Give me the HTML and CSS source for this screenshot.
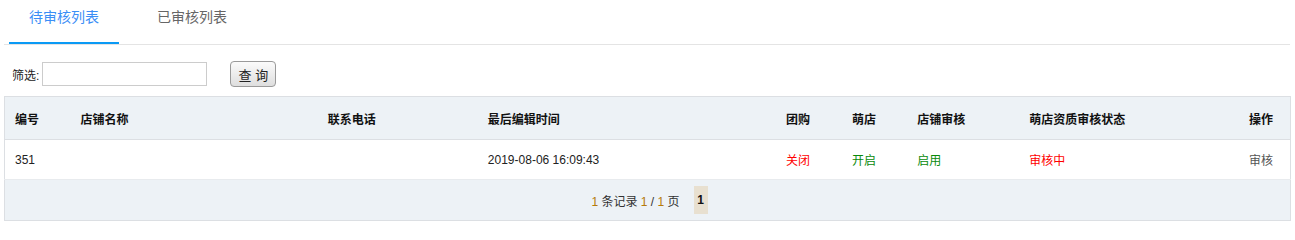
FILE: index.html
```html
<!DOCTYPE html>
<html lang="zh-CN">
<head>
<meta charset="utf-8">
<title>审核列表</title>
<link rel="stylesheet" href="styles.css">
</head>
<body>
<div class="page">
  <div class="tabs">
    <div class="tab active">待审核列表</div>
    <div class="tab">已审核列表</div>
  </div>
  <div class="filter">
    <label class="filter-label">筛选:</label>
    <input class="filter-input" type="text">
    <button class="btn">查 询</button>
  </div>
  <table class="grid">
    <colgroup>
      <col class="c1"><col class="c2"><col class="c3"><col class="c4"><col class="c5"><col class="c6"><col class="c7"><col class="c8"><col class="c9">
    </colgroup>
    <thead>
      <tr>
        <th>编号</th><th>店铺名称</th><th>联系电话</th><th>最后编辑时间</th><th>团购</th><th>萌店</th><th>店铺审核</th><th>萌店资质审核状态</th><th class="right">操作</th>
      </tr>
    </thead>
    <tbody>
      <tr>
        <td>351</td><td></td><td></td><td>2019-08-06 16:09:43</td><td class="red">关闭</td><td class="green">开启</td><td class="green">启用</td><td class="red">审核中</td><td class="right op">审核</td>
      </tr>
    </tbody>
    <tfoot>
      <tr>
        <td colspan="9" class="pager-cell">
          <div class="pager">
            <span class="info"><span class="num">1</span> 条记录 <span class="num">1</span> / <span class="num">1</span> 页</span>
            <span class="page-cur">1</span>
          </div>
        </td>
      </tr>
    </tfoot>
  </table>
</div>
</body>
</html>
```
FILE: styles.css
```css
html, body {
  margin: 0;
  padding: 0;
  background: #fff;
}
body {
  font-family: "Liberation Sans", Arial, "Noto Sans CJK SC", sans-serif;
  font-size: 12px;
  color: #333;
}
.page {
  margin: 0 4px;
  width: 1287px;
}
.tabs {
  display: flex;
  gap: 18px;
  padding-left: 5px;
  border-bottom: 1px solid #e4e4e4;
  width: 1281px;
}
.tab {
  width: 110px;
  text-align: center;
  font-size: 14px;
  line-height: 14px;
  padding-top: 10px;
  height: 18px;
  padding-bottom: 14px;
  color: #666;
  border-bottom: 2px solid transparent;
}
.tab.active {
  color: #3a8ef6;
  border-bottom-color: #0a9af5;
}
.filter {
  display: flex;
  align-items: center;
  height: 26px;
  margin-top: 16px;
  margin-bottom: 9px;
  padding-left: 8px;
}
.filter-label {
  font-size: 12px;
  color: #222;
  margin-right: 3px;
}
.filter-input {
  box-sizing: border-box;
  width: 165px;
  height: 24px;
  border: 1px solid #ccc;
  padding: 0 4px;
  margin: 0;
}
.btn {
  box-sizing: border-box;
  margin-left: 23px;
  width: 46px;
  height: 26px;
  border: 1px solid #9a9a9a;
  border-radius: 4px;
  background: linear-gradient(#fbfbfb, #dedede);
  font-family: "Liberation Sans", Arial, "Noto Sans CJK SC", sans-serif;
  font-size: 13px;
  color: #222;
  padding: 0;
}
.grid {
  width: 1287px;
  border-collapse: collapse;
  table-layout: fixed;
  border: 1px solid #dcdfe3;
}
.c1 { width: 66px; }
.c2 { width: 247px; }
.c3 { width: 160px; }
.c4 { width: 298px; }
.c5 { width: 66px; }
.c6 { width: 65px; }
.c7 { width: 112px; }
.c8 { width: 219px; }
.c9 { width: 52px; }
.grid th {
  background: #edf2f6;
  height: 42px;
  padding: 0 0 0 10px;
  text-align: left;
  font-weight: bold;
  color: #111;
  border-bottom: 1px solid #dcdfe3;
}
.grid td {
  height: 39px;
  padding: 0 0 0 10px;
  border-bottom: 1px solid #e8ebee;
  color: #222;
}
.grid th.right, .grid td.right {
  text-align: right;
  padding: 0 17px 0 0;
}
.red { color: #ff0000 !important; }
.green { color: #0a8a0a !important; }
.op { color: #555 !important; }
.grid td.pager-cell {
  background: #edf2f6;
  height: 40px;
  padding: 0;
  border-bottom: none;
}
.pager {
  display: flex;
  justify-content: center;
  align-items: center;
  gap: 14px;
  padding-left: 4px;
}
.info {
  color: #333;
}
.num {
  color: #b5790a;
}
.page-cur {
  display: flex;
  align-items: center;
  justify-content: center;
  width: 14px;
  height: 28px;
  background: #e8e0d0;
  font-weight: bold;
  color: #111;
}
```
